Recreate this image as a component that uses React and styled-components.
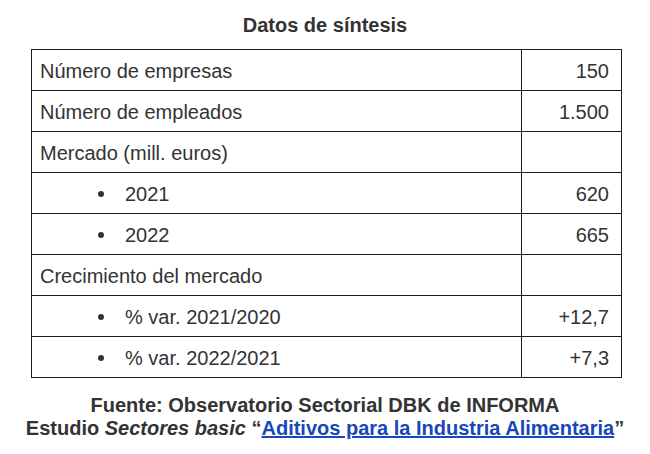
import styled, { createGlobalStyle } from "styled-components";

const GlobalStyle = createGlobalStyle`
  html, body {
    margin: 0;
    padding: 0;
    background: #ffffff;
  }
  body {
    font-family: "Liberation Sans", Arial, sans-serif;
    color: #333333;
  }
`;

const filas = [
  { label: "Número de empresas", valor: "150" },
  { label: "Número de empleados", valor: "1.500" },
  { label: "Mercado (mill. euros)", valor: "" },
  { label: "2021", valor: "620", bullet: true },
  { label: "2022", valor: "665", bullet: true },
  { label: "Crecimiento del mercado", valor: "" },
  { label: "% var. 2021/2020", valor: "+12,7", bullet: true },
  { label: "% var. 2022/2021", valor: "+7,3", bullet: true },
];

export default function App() {
  return (
    <Page>
      <GlobalStyle />
      <Titulo>Datos de síntesis</Titulo>
      <Tabla>
        <colgroup>
          <col style={{ width: 490 }} />
          <col style={{ width: 100 }} />
        </colgroup>
        <tbody>
          {filas.map((f, i) => (
            <Fila key={i}>
              <Etiqueta $bullet={f.bullet}>
                {f.bullet && <Punto />}
                {f.label}
              </Etiqueta>
              <Valor>{f.valor}</Valor>
            </Fila>
          ))}
        </tbody>
      </Tabla>
      <Fuente>
        <span>Fuente: Observatorio Sectorial DBK de INFORMA</span>
        <span>
          Estudio <em>Sectores basic</em> “
          <Enlace href="#">Aditivos para la Industria Alimentaria</Enlace>”
        </span>
      </Fuente>
    </Page>
  );
}

const Page = styled.div`
  width: 650px;
  height: 454px;
  display: flex;
  flex-direction: column;
  align-items: flex-start;
  padding: 13px 0 0 31px;
  box-sizing: border-box;
`;

const Titulo = styled.h2`
  align-self: stretch;
  margin: 0 0 12px;
  padding-right: 31px;
  text-align: center;
  font-size: 20px;
  font-weight: 700;
  line-height: 24px;
  color: #333;
`;

const Tabla = styled.table`
  width: 591px;
  table-layout: fixed;
  border-collapse: collapse;
  border: 1px solid #1c1c1c;
  font-size: 20px;
  color: #333;
`;

const Fila = styled.tr`
  height: 41px;
  td {
    border: 1px solid #1c1c1c;
  }
`;

const Etiqueta = styled.td`
  padding: 2px 0 0 ${(p) => (p.$bullet ? "66px" : "8px")};
  vertical-align: middle;
  white-space: nowrap;
`;

const Punto = styled.span`
  display: inline-block;
  width: 6px;
  height: 6px;
  margin: 0 21px 0 0;
  border-radius: 50%;
  background: #333;
  vertical-align: 4px;
`;

const Valor = styled.td`
  text-align: right;
  padding: 2px 12px 0 0;
  vertical-align: middle;
`;

const Fuente = styled.div`
  align-self: stretch;
  margin: 16px 0 0 -31px;
  display: flex;
  flex-direction: column;
  align-items: center;
  font-size: 20px;
  font-weight: 700;
  line-height: 23px;
  color: #333;
  em {
    font-style: italic;
  }
`;

const Enlace = styled.a`
  color: #1747b8;
  text-decoration: underline;
`;
